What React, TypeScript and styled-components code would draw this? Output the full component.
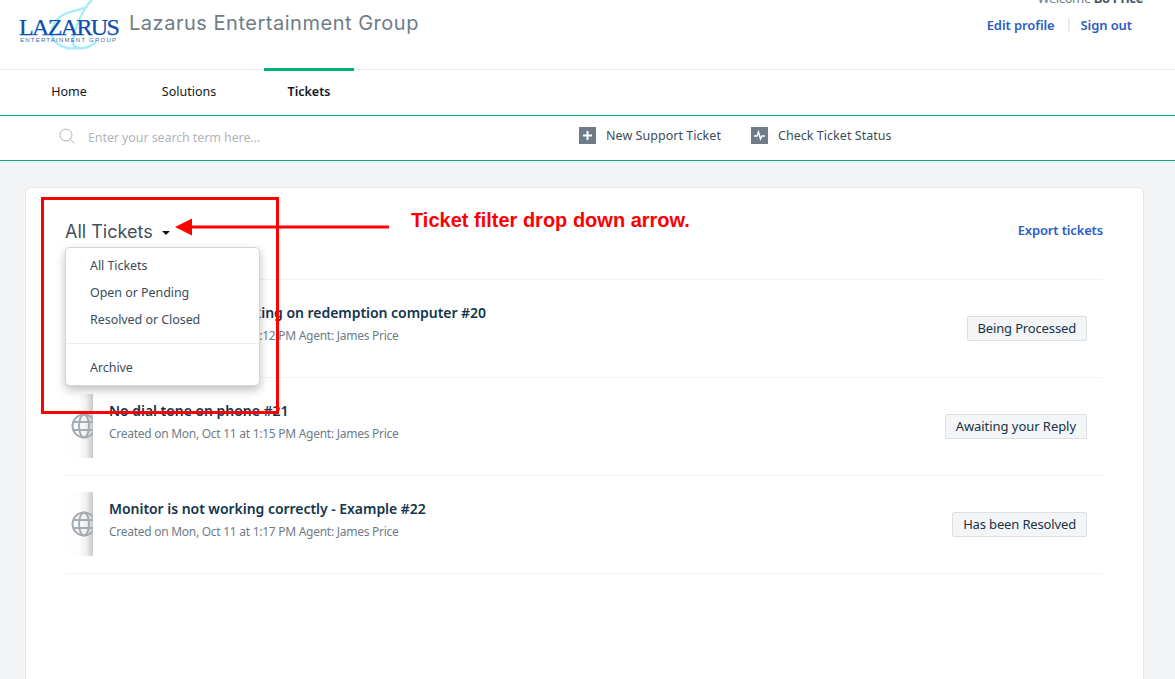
import styled, { createGlobalStyle } from "styled-components"

const GlobalStyle = createGlobalStyle`
  html, body {
    margin: 0;
    padding: 0;
    height: 679px;
    overflow: hidden;
    background: #f3f4f6;
    font-family: "Noto Sans", "Open Sans", sans-serif;
    color: #183247;
  }
`

const Page = styled.div`
  position: relative;
  width: 1175px;
  height: 679px;
  overflow: hidden;
`

const Header = styled.header`
  display: flex;
  justify-content: space-between;
  height: 69px;
  background: #fff;
  border-bottom: 1px solid #ebebeb;
`

const Brand = styled.div`
  display: flex;
  align-items: flex-start;
  padding-left: 19px;
`

const Logo = styled.div`
  position: relative;
  width: 101px;
  height: 52px;
  margin-right: 9px;
  svg {
    position: absolute;
    left: 30px;
    top: 0;
  }
`

const LogoWord = styled.div`
  position: absolute;
  left: 0;
  top: 14px;
  font-family: "Liberation Serif", serif;
  font-size: 24px;
  line-height: 26px;
  letter-spacing: -1.65px;
  color: #0b4fb0;
  -webkit-text-stroke: 0.25px #0b4fb0;
`

const LogoSub = styled.div`
  position: absolute;
  left: 1px;
  top: 37px;
  font-family: "Liberation Sans", sans-serif;
  font-size: 6px;
  line-height: 7px;
  letter-spacing: 1.22px;
  color: #3a69ad;
  white-space: nowrap;
`

const BrandName = styled.div`
  font-family: Inter, sans-serif;
  font-size: 20px;
  line-height: 28px;
  margin-top: 9px;
  letter-spacing: 0.52px;
  color: #6f7c87;
`

const UserBox = styled.div`
  padding-right: 43px;
  text-align: right;
  font-size: 13px;
`

const Welcome = styled.div`
  margin-top: -11px;
  margin-right: -11px;
  height: 18px;
  line-height: 18px;
  letter-spacing: -0.4px;
  color: #6f7c87;
  b {
    color: #475867;
  }
`

const UserLinks = styled.div`
  display: flex;
  justify-content: flex-end;
  align-items: center;
  margin-top: 9px;
`

const BlueLink = styled.a`
  font-size: 13px;
  font-weight: 600;
  line-height: 18px;
  letter-spacing: -0.1px;
  color: #2c5cc5;
`

const Divider = styled.span`
  width: 2px;
  height: 14px;
  margin: 0 11px 0 13px;
  background: #e6ebef;
`

const TabBar = styled.nav`
  display: flex;
  height: 45px;
  background: #fff;
  border-bottom: 1px solid #00b27a;
`

const Tab = styled.div<{ $active?: boolean }>`
  width: 90px;
  margin-right: 30px;
  margin-top: -2px;
  height: 47px;
  padding-bottom: 4px;
  box-sizing: border-box;
  display: flex;
  align-items: center;
  justify-content: center;
  font-size: 12.5px;
  font-weight: ${(p) => (p.$active ? 600 : 400)};
  color: #12171c;
  border-top: 3px solid ${(p) => (p.$active ? "#00b27a" : "transparent")};
  &:first-child {
    margin-left: 24px;
  }
`

const SearchBar = styled.div`
  display: flex;
  align-items: center;
  height: 44px;
  background: #fff;
  border-bottom: 1px solid #00b27a;
`

const SearchField = styled.div`
  display: flex;
  align-items: center;
  width: 520px;
  margin-top: -2px;
  padding-left: 59px;
  gap: 13px;
  font-size: 12.5px;
  letter-spacing: -0.1px;
  color: #b1b5b9;
  svg {
    margin-top: -2px;
  }
`

const Action = styled.div`
  display: flex;
  align-items: center;
  gap: 10px;
  margin-top: -6px;
  margin-right: 30px;
  font-size: 12.5px;
  letter-spacing: 0.04px;
  color: #3b4c5c;
`

const ActionIcon = styled.span`
  display: flex;
  align-items: center;
  justify-content: center;
  width: 17px;
  height: 17px;
  background: #6f7c87;
`

const Card = styled.main`
  box-sizing: border-box;
  width: 1119px;
  height: 520px;
  margin: 26px 0 0 25px;
  padding: 0 40px 0 39px;
  background: #fff;
  border: 1px solid #e4e7ea;
  border-radius: 6px;
`

const CardHead = styled.div`
  display: flex;
  justify-content: space-between;
  align-items: flex-start;
  height: 92px;
  padding-top: 32px;
  box-sizing: border-box;
  border-bottom: 1px solid #f1f2f3;
  ${BlueLink} {
    margin-top: 1px;
    letter-spacing: -0.15px;
  }
`

const Filter = styled.div`
  display: flex;
  align-items: center;
  font-family: Inter, sans-serif;
  font-size: 18px;
  line-height: 24px;
  color: #3f5060;
`

const Caret = styled.span`
  width: 0;
  height: 0;
  margin-left: 9px;
  margin-top: 2px;
  border-left: 4px solid transparent;
  border-right: 4px solid transparent;
  border-top: 4px solid #12171c;
`

const Row = styled.div`
  display: flex;
  align-items: center;
  height: 97px;
  border-bottom: 1px solid #f1f2f3;
  padding-right: 16px;
`

const IconCell = styled.div`
  display: flex;
  align-items: center;
  width: 28px;
  height: 64px;
  margin: -2px 16px 0 0;
  overflow: hidden;
  padding-left: 6px;
  box-sizing: border-box;
  background: linear-gradient(to right, #fff 0, #fdfdfd 50%, #f0f0f0 75%, #c9c9c9 100%);
`

const RowBody = styled.div`
  flex: 1;
  padding-bottom: 11px;
`

const RowTitle = styled.div`
  font-size: 14px;
  font-weight: 600;
  line-height: 20px;
  letter-spacing: -0.04px;
  color: #12344d;
`

const RowMeta = styled.div`
  margin-top: 4px;
  font-size: 12px;
  line-height: 17px;
  letter-spacing: -0.27px;
  color: #6f7c87;
`

const Status = styled.div<{ $wide?: boolean }>`
  padding: 0 10px;
  height: 23px;
  line-height: 23px;
  font-size: 13px;
  letter-spacing: ${(p) => (p.$wide ? "-0.05px" : "-0.15px")};
  color: #183247;
  background: #f3f5f7;
  border: 1px solid #dadfe3;
  border-radius: 2px;
`

const Menu = styled.div`
  position: absolute;
  left: 65px;
  top: 247px;
  box-sizing: border-box;
  width: 195px;
  height: 139px;
  padding-top: 4px;
  background: #fff;
  border: 1px solid #cfd7df;
  border-radius: 5px;
  box-shadow: 0 4px 10px rgba(0, 0, 0, 0.25);
`

const MenuItem = styled.div`
  height: 27px;
  line-height: 27px;
  padding-left: 24px;
  font-size: 12.5px;
  letter-spacing: -0.06px;
  color: #3b4c5c;
`

const MenuRule = styled.div`
  height: 1px;
  margin: 10px 0;
  background: #ebeff3;
`

const RedBox = styled.div`
  position: absolute;
  left: 41px;
  top: 197px;
  box-sizing: border-box;
  width: 238px;
  height: 217px;
  border: 3px solid #ff0000;
`

const Arrow = styled.svg`
  position: absolute;
  left: 175px;
  top: 217px;
`

const Note = styled.div`
  position: absolute;
  left: 411px;
  top: 207px;
  font-family: "Liberation Sans", sans-serif;
  font-size: 20px;
  line-height: 26px;
  font-weight: 700;
  color: #ff0000;
`

const Globe = () => (
  <svg width="26" height="26" viewBox="0 0 26 26" fill="none" stroke="#a4abb2" strokeWidth="2" style={{ flex: "none" }}>
    <circle cx="13" cy="13" r="11.5" />
    <ellipse cx="13" cy="13" rx="5" ry="11.5" />
    <path d="M2.4 9h21.2M2.4 17h21.2" />
  </svg>
)

const tickets = [
  { title: "Label printer not working on redemption computer #20", meta: "Created on Mon, Oct 11 at 1:12 PM Agent: James Price", status: "Being Processed" },
  { title: "No dial tone on phone #21", meta: "Created on Mon, Oct 11 at 1:15 PM Agent: James Price", status: "Awaiting your Reply", wide: true },
  { title: "Monitor is not working correctly - Example #22", meta: "Created on Mon, Oct 11 at 1:17 PM Agent: James Price", status: "Has been Resolved" },
]

export default function App() {
  return (
    <Page>
      <GlobalStyle />
      <Header>
        <Brand>
          <Logo>
            <svg width="60" height="52" viewBox="0 0 60 52" fill="none" stroke="#a8ecfa" strokeWidth="2.4">
              <path d="M43 0C38 4 30 18 27 28C24 38 20 46 30 48C36 49 42 46 47 42" />
              <path d="M36 8C30 10 12 12 6 22C0 32 2 44 18 48C22 49 26 48 30 48" />
            </svg>
            <LogoWord>LAZARUS</LogoWord>
            <LogoSub>ENTERTAINMENT GROUP</LogoSub>
          </Logo>
          <BrandName>Lazarus Entertainment Group</BrandName>
        </Brand>
        <UserBox>
          <Welcome>Welcome <b>Bo Price</b></Welcome>
          <UserLinks>
            <BlueLink>Edit profile</BlueLink>
            <Divider />
            <BlueLink>Sign out</BlueLink>
          </UserLinks>
        </UserBox>
      </Header>
      <TabBar>
        <Tab>Home</Tab>
        <Tab>Solutions</Tab>
        <Tab $active>Tickets</Tab>
      </TabBar>
      <SearchBar>
        <SearchField>
          <svg width="16" height="16" viewBox="0 0 16 16" fill="none" stroke="#b1b5b9" strokeWidth="1">
            <circle cx="7" cy="7" r="6" />
            <path d="M11.5 11.5l4 4" />
          </svg>
          Enter your search term here...
        </SearchField>
        <Action>
          <ActionIcon>
            <svg width="11" height="11" viewBox="0 0 11 11" stroke="#fff" strokeWidth="2">
              <path d="M5.5 1v9M1 5.5h9" />
            </svg>
          </ActionIcon>
          New Support Ticket
        </Action>
        <Action>
          <ActionIcon>
            <svg width="13" height="11" viewBox="0 0 13 11" fill="none" stroke="#fff" strokeWidth="1.4">
              <path d="M1 6h3l1.5-4 2 7L9 6h3" />
            </svg>
          </ActionIcon>
          Check Ticket Status
        </Action>
      </SearchBar>
      <Card>
        <CardHead>
          <Filter>All Tickets<Caret /></Filter>
          <BlueLink>Export tickets</BlueLink>
        </CardHead>
        {tickets.map((t) => (
          <Row key={t.title}>
            <IconCell><Globe /></IconCell>
            <RowBody>
              <RowTitle>{t.title}</RowTitle>
              <RowMeta>{t.meta}</RowMeta>
            </RowBody>
            <Status $wide={t.wide}>{t.status}</Status>
          </Row>
        ))}
      </Card>
      <Menu>
        <MenuItem>All Tickets</MenuItem>
        <MenuItem>Open or Pending</MenuItem>
        <MenuItem>Resolved or Closed</MenuItem>
        <MenuRule />
        <MenuItem>Archive</MenuItem>
      </Menu>
      <RedBox />
      <Arrow width="216" height="20" viewBox="0 0 216 20">
        <path d="M0 10L17 1.5v7h197v3H17v7z" fill="#ff0000" />
      </Arrow>
      <Note>Ticket filter drop down arrow.</Note>
    </Page>
  )
}
